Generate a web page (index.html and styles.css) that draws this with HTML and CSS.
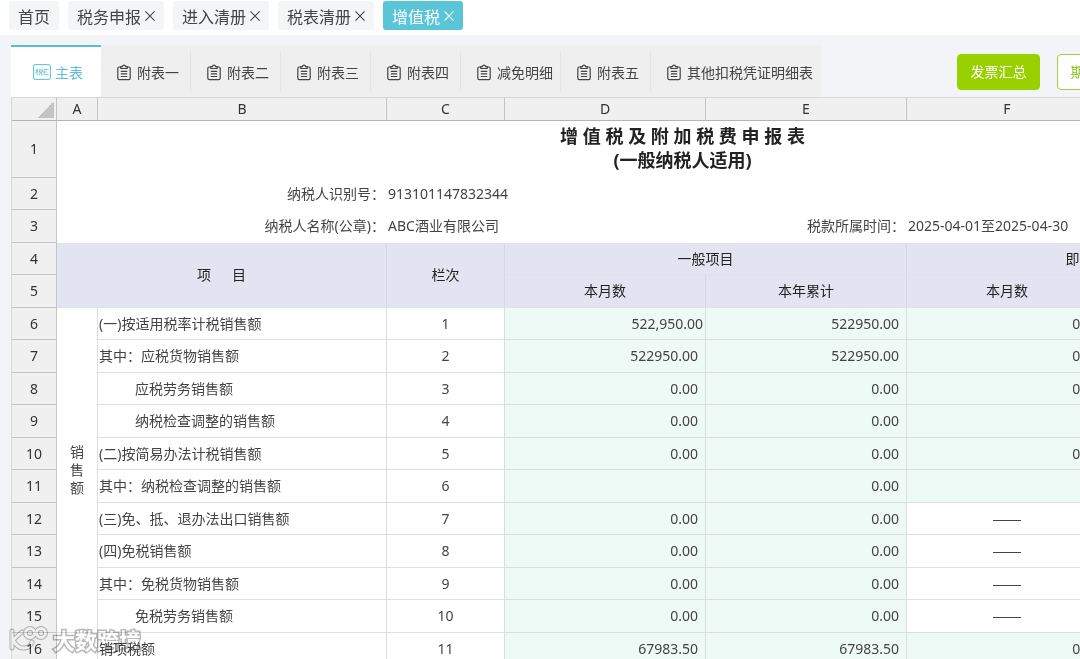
FILE: index.html
```
<!DOCTYPE html>
<html lang="zh-CN">
<head>
    <meta charset="UTF-8">
    <meta name="viewport" content="width=device-width, initial-scale=1.0">
    <title>增值税</title>
    <link rel="stylesheet" href="styles.css">
</head>
<body>
<svg class="sprite" aria-hidden="true">
    <symbol id="close" viewBox="0 0 11 11">
        <path d="M.5 .5l10 10M10.5 .5l-10 10" fill="none" stroke="currentColor" stroke-width="1.2"/>
    </symbol>
    <symbol id="board" viewBox="0 0 14 16">
        <path d="M3.5 2.5H2.2Q.8 2.5.8 4v9.6q0 1.6 1.4 1.6h9.6q1.4 0 1.4-1.6V4q0-1.5-1.4-1.5h-1.3M3.8 4V2.2h1.6Q5.6.7 7 .7t1.6 1.5h1.6V4zM3.8 6.8h6.4M3.8 9.4h6.4M3.8 12h6.4" fill="none" stroke="currentColor" stroke-width="1.2"/>
    </symbol>
</svg>

<nav class="page-tabs">
    <button class="page-tab">首页</button>
    <button class="page-tab">税务申报<svg class="close-icon"><use href="#close"/></svg></button>
    <button class="page-tab">进入清册<svg class="close-icon"><use href="#close"/></svg></button>
    <button class="page-tab">税表清册<svg class="close-icon"><use href="#close"/></svg></button>
    <button class="page-tab active">增值税<svg class="close-icon"><use href="#close"/></svg></button>
</nav>

<main class="content">
    <div class="toolbar">
        <div class="form-tabs">
            <button class="form-tab active">
                <svg class="main-icon" viewBox="0 0 18 16" fill="none" stroke="currentColor">
                    <rect x=".6" y=".6" width="16.8" height="14.8" rx="1.5"/>
                    <path d="M2.5 6.2h3M4 4.5v7M2.6 9l1.4-2 1.3 1.6M6.4 4.6l.7 1M9.4 4.6l-.7 1M6.5 6h2.8v2H6.5zM7.3 8l-.9 3.4M8.6 8v3h1.2M11 5.5h4.6M11 8h3M11 10.6h4.6M11 5.5v5" stroke-width=".8"/>
                </svg>主表</button>
            <button class="form-tab"><svg class="board-icon"><use href="#board"/></svg>附表一</button>
            <button class="form-tab"><svg class="board-icon"><use href="#board"/></svg>附表二</button>
            <button class="form-tab"><svg class="board-icon"><use href="#board"/></svg>附表三</button>
            <button class="form-tab"><svg class="board-icon"><use href="#board"/></svg>附表四</button>
            <button class="form-tab"><svg class="board-icon"><use href="#board"/></svg>减免明细</button>
            <button class="form-tab"><svg class="board-icon"><use href="#board"/></svg>附表五</button>
            <button class="form-tab"><svg class="board-icon"><use href="#board"/></svg>其他扣税凭证明细表</button>
        </div>
        <div class="actions">
            <button class="btn btn-fill">发票汇总</button>
            <button class="btn">期初设置</button>
        </div>
    </div>

    <div class="sheet-box">
        <table class="sheet">
            <colgroup>
                <col class="col-num"><col class="col-a"><col class="col-b"><col class="col-c">
                <col class="col-money"><col class="col-money"><col class="col-money"><col class="col-money">
            </colgroup>
            <thead>
                <tr>
                    <th class="corner"></th>
                    <th>A</th><th>B</th><th>C</th><th>D</th><th>E</th><th>F</th><th>G</th>
                </tr>
            </thead>
            <tbody>
                <tr class="title-row">
                    <th>1</th>
                    <td class="title" colspan="7">增 值 税 及 附 加 税 费 申 报 表<br>(一般纳税人适用)</td>
                </tr>
                <tr class="info">
                    <th>2</th>
                    <td class="label" colspan="2">纳税人识别号：</td>
                    <td colspan="5">913101147832344</td>
                </tr>
                <tr class="info">
                    <th>3</th>
                    <td class="label" colspan="2">纳税人名称(公章)：</td>
                    <td colspan="2">ABC酒业有限公司</td>
                    <td class="label">税款所属时间：</td>
                    <td colspan="2">2025-04-01至2025-04-30</td>
                </tr>
                <tr class="head">
                    <th>4</th>
                    <td colspan="2" rowspan="2">项&emsp;&ensp;目</td>
                    <td rowspan="2">栏次</td>
                    <td colspan="2">一般项目</td>
                    <td colspan="2">即征即退项目</td>
                </tr>
                <tr class="head">
                    <th>5</th>
                    <td>本月数</td><td>本年累计</td><td>本月数</td><td>本年累计</td>
                </tr>
                <tr>
                    <th>6</th>
                    <td class="group" rowspan="10">销<br>售<br>额</td>
                    <td>(一)按适用税率计税销售额</td><td class="no">1</td>
                    <td class="money editing">522,950.00</td><td class="money">522950.00</td><td class="money">0.00</td><td class="money">0.00</td>
                </tr>
                <tr>
                    <th>7</th>
                    <td>其中：应税货物销售额</td><td class="no">2</td>
                    <td class="money">522950.00</td><td class="money">522950.00</td><td class="money">0.00</td><td class="money">0.00</td>
                </tr>
                <tr>
                    <th>8</th>
                    <td class="sub">应税劳务销售额</td><td class="no">3</td>
                    <td class="money">0.00</td><td class="money">0.00</td><td class="money">0.00</td><td class="money">0.00</td>
                </tr>
                <tr>
                    <th>9</th>
                    <td class="sub">纳税检查调整的销售额</td><td class="no">4</td>
                    <td class="money">0.00</td><td class="money">0.00</td><td class="money"></td><td class="money"></td>
                </tr>
                <tr>
                    <th>10</th>
                    <td>(二)按简易办法计税销售额</td><td class="no">5</td>
                    <td class="money">0.00</td><td class="money">0.00</td><td class="money">0.00</td><td class="money">0.00</td>
                </tr>
                <tr>
                    <th>11</th>
                    <td>其中：纳税检查调整的销售额</td><td class="no">6</td>
                    <td class="money"></td><td class="money">0.00</td><td class="money"></td><td class="money"></td>
                </tr>
                <tr>
                    <th>12</th>
                    <td>(三)免、抵、退办法出口销售额</td><td class="no">7</td>
                    <td class="money">0.00</td><td class="money">0.00</td><td class="no dash">——</td><td class="no dash">——</td>
                </tr>
                <tr>
                    <th>13</th>
                    <td>(四)免税销售额</td><td class="no">8</td>
                    <td class="money">0.00</td><td class="money">0.00</td><td class="no dash">——</td><td class="no dash">——</td>
                </tr>
                <tr>
                    <th>14</th>
                    <td>其中：免税货物销售额</td><td class="no">9</td>
                    <td class="money">0.00</td><td class="money">0.00</td><td class="no dash">——</td><td class="no dash">——</td>
                </tr>
                <tr>
                    <th>15</th>
                    <td class="sub">免税劳务销售额</td><td class="no">10</td>
                    <td class="money">0.00</td><td class="money">0.00</td><td class="no dash">——</td><td class="no dash">——</td>
                </tr>
                <tr>
                    <th>16</th>
                    <td></td>
                    <td>销项税额</td><td class="no">11</td>
                    <td class="money">67983.50</td><td class="money">67983.50</td><td class="money">0.00</td><td class="money">0.00</td>
                </tr>
            </tbody>
        </table>
    </div>
</main>

<div class="watermark">
    <svg class="watermark-logo" viewBox="0 0 40 28" fill="none" stroke-linecap="round" stroke-linejoin="round">
        <g stroke="#b9b9b9" stroke-width="5">
            <path d="M3 5v17M13 6L4 14q5 9 11 8 6 0 8-6"/>
            <circle cx="21" cy="7" r="4.5"/>
            <circle cx="32" cy="7" r="4.5"/>
        </g>
        <g stroke="#fff" stroke-width="3">
            <path d="M3 5v17M13 6L4 14q5 9 11 8 6 0 8-6"/>
            <circle cx="21" cy="7" r="4.5"/>
            <circle cx="32" cy="7" r="4.5"/>
        </g>
    </svg>
    <span>大数跨境</span>
</div>
</body>
</html>
```
FILE: styles.css
```
* { box-sizing: border-box; }
body {
    margin: 0;
    height: 100vh;
    overflow: hidden;
    display: flex;
    flex-direction: column;
    background: #fff;
    color: #444;
    font: 14px/20px "Noto Sans", "Noto Sans CJK SC", sans-serif;
}
button { font-family: inherit; cursor: pointer; }
.sprite { position: absolute; width: 0; height: 0; }

/* opened pages */
.page-tabs { display: flex; flex: none; gap: 9px; padding: 1px 9px 5px; }
.page-tab {
    display: flex;
    align-items: center;
    gap: 4px;
    height: 29px;
    padding: 0 9px;
    border: 0;
    border-radius: 3px;
    background: #f4f5f6;
    color: #444;
    font-size: 16px;
    white-space: nowrap;
}
.page-tab.active { background: #5bc5d8; color: #fff; }
.close-icon { width: 10px; height: 10px; }

/* form tabs and actions */
.content { flex: 1; padding: 10px 0 0 11px; background: #f2f4f7; overflow: hidden; }
.toolbar { display: flex; justify-content: space-between; height: 52px; }
.form-tabs { display: flex; flex: none; background: #efefef; }
.form-tab {
    display: flex;
    align-items: center;
    gap: 6px;
    min-width: 90px;
    padding: 2px 8px 0 16px;
    border: 0;
    background: linear-gradient(#e4e4e4, #e4e4e4) right center / 1px 40px no-repeat;
    color: #444;
    font-size: 14px;
    white-space: nowrap;
}
.form-tab:last-child { background: none; }
.form-tab.active {
    gap: 4px;
    padding: 0 18px 0 22px;
    border-top: 2px solid #5bbccd;
    background: #fff;
    color: #5bc0d2;
}
.board-icon { width: 14px; height: 17px; }
.main-icon { width: 18px; height: 16px; }
.actions { display: flex; flex: none; gap: 17px; padding-top: 9px; margin-right: -60px; }
.btn {
    width: 83px;
    height: 36px;
    padding: 0 0 2px;
    border: 1px solid #a3cf45;
    border-radius: 4px;
    background: #fff;
    color: #8cc021;
    font-size: 14px;
}
.btn-fill { border-color: #99d000; background: #99d000; color: #fff; }

/* spreadsheet */
.sheet-box { overflow: hidden; border-left: 1px solid #d8d8d8; }
.sheet { width: 1297px; table-layout: fixed; border-collapse: separate; border-spacing: 0; background: #fff; }
.col-num { width: 45px; }
.col-a { width: 41px; }
.col-b { width: 289px; }
.col-c { width: 118px; }
.col-money { width: 201px; }
.sheet tr { height: 32px; }
.sheet tbody tr:nth-child(odd) { height: 33px; }
.sheet tbody .title-row:nth-child(odd) { height: 57px; }
.sheet th, .sheet td {
    padding: 0 1px;
    border-right: 1px solid #dcdfde;
    border-bottom: 1px solid #dcdfde;
    line-height: 18px;
    text-align: left;
    white-space: nowrap;
}
.sheet th {
    border-color: #c4c4c4;
    background: #f0f0f0;
    color: #333;
    font-weight: normal;
    text-align: center;
}
.sheet thead tr { height: 24px; }
.sheet thead th { border-top: 1px solid #d8d8d8; border-bottom-color: #b4b4b4; }
.sheet thead .corner { background: linear-gradient(135deg, #f0f0f0 50%, #c4c4c4 50%) 25px 3px / 17px 17px no-repeat #f0f0f0; }
.sheet .title-row td, .sheet .info td { border-color: transparent; }
.sheet .title {
    padding-bottom: 3px;
    color: #222;
    font-size: 18px;
    font-weight: bold;
    line-height: 24px;
    text-align: center;
}
.sheet .info .label { text-align: right; }
.sheet .head td {
    border-right-color: #d5d8e2;
    border-bottom-color: #dfe2ed;
    background: #e2e5f1;
    color: #222;
    text-align: center;
}
.sheet .group { text-align: center; white-space: normal; }
.sheet .sub { padding-left: 37px; }
.sheet .no { text-align: center; }
.sheet .dash { font-family: "Liberation Sans", sans-serif; }
.sheet .money { padding-right: 7px; background: #eefaf6; text-align: right; }
.sheet .editing { padding-right: 2px; }

.watermark {
    position: absolute;
    left: 9px;
    bottom: 4px;
    display: flex;
    align-items: center;
    gap: 4px;
    color: #fff;
    font-size: 22px;
    font-weight: bold;
    line-height: 30px;
    mix-blend-mode: multiply;
    -webkit-text-stroke: 3px #b9b9b9;
    paint-order: stroke fill;
}
.watermark-logo { width: 40px; height: 28px; }
```
